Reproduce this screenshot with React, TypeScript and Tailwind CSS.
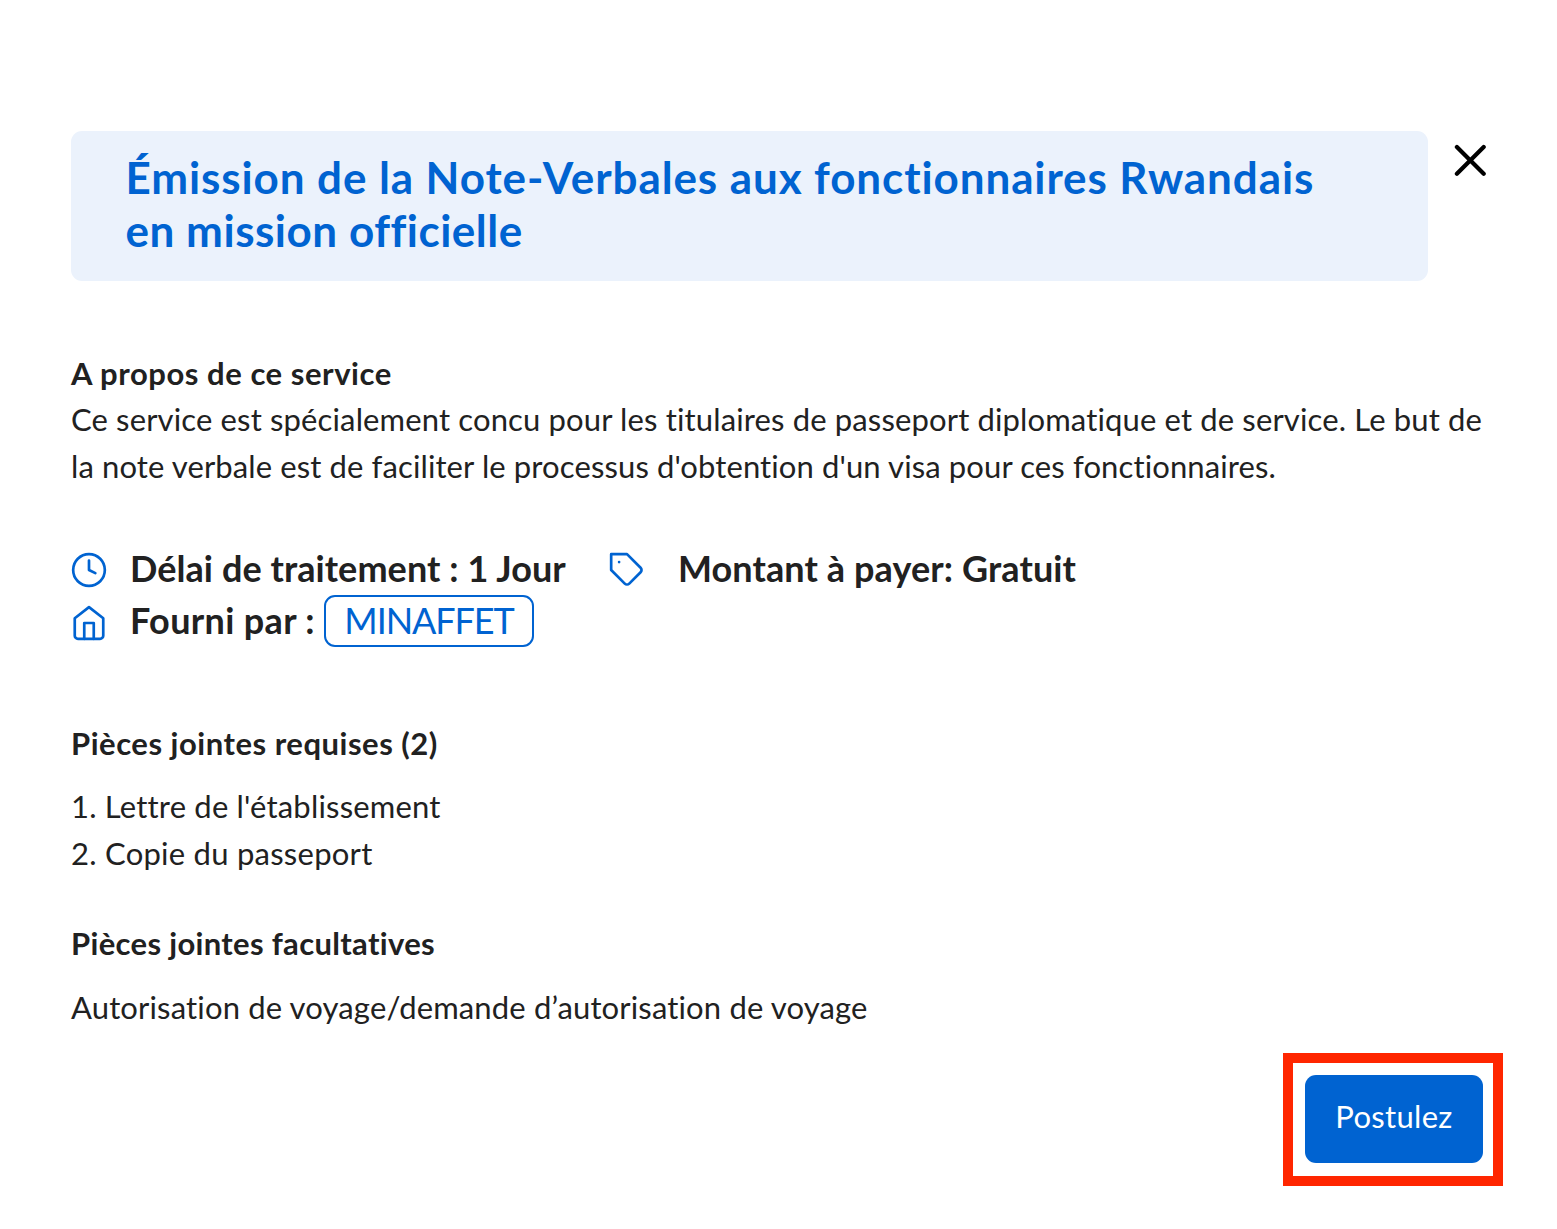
import type { ReactNode } from "react";

const requiredFiles = [
  { name: "1. Lettre de l'établissement", className: "tracking-[0.19px]" },
  { name: "2. Copie du passeport", className: "tracking-[0.25px]" },
];

interface IconProps {
  className?: string;
  children: ReactNode;
}

function Icon({ className, children }: IconProps) {
  return (
    <svg
      viewBox="0 0 24 24"
      fill="none"
      stroke="currentColor"
      strokeWidth="1.7"
      strokeLinecap="round"
      strokeLinejoin="round"
      className={`size-[38px] shrink-0 text-[#0063d1] ${className ?? ""}`}
    >
      {children}
    </svg>
  );
}

function Header() {
  return (
    <header className="flex items-start">
      <div className="h-[150px] w-[1357px] rounded-[11px] bg-[#ebf2fc] pt-[19.5px] pl-[54.5px]">
        <h1 className="text-[44px] leading-[53px] font-bold whitespace-nowrap text-[#0063d1]">
          <span className="block tracking-[0.9px]">
            Émission de la Note-Verbales aux fonctionnaires Rwandais
          </span>
          <span className="block tracking-[0.52px]">en mission officielle</span>
        </h1>
      </div>
      <button aria-label="Fermer" className="mt-[13px] ml-[26px]">
        <svg viewBox="0 0 32 32" className="block size-8" stroke="black" strokeWidth="4.2" strokeLinecap="round">
          <path d="M2.9 2.9l26.8 26.8M29.7 2.9L2.9 29.7" />
        </svg>
      </button>
    </header>
  );
}

function Details() {
  return (
    <section className="mt-[52.5px] text-[36px] leading-[52px] font-bold">
      <div className="flex h-[52px] items-start">
        <Icon className="mt-[9px] -ml-[0.6px]">
          <circle cx="12" cy="12" r="10" />
          <path d="M12 6v6l4 2" />
        </Icon>
        <span className="ml-[21.6px] w-[478px] tracking-[0.07px]">Délai de traitement : 1 Jour</span>
        <Icon className="mt-[9px]">
          <path d="M20.59 13.41l-7.17 7.17a2 2 0 0 1-2.83 0L2 12V2h10l8.59 8.59a2 2 0 0 1 0 2.82z" />
          <path d="M7 7h.01" />
        </Icon>
        <span className="ml-8 tracking-[0.1px]">Montant à payer: Gratuit</span>
      </div>
      <div className="flex h-[52px] items-start">
        <Icon className="mt-[10px] -ml-[0.6px]">
          <path d="M3 9l9-7 9 7v11a2 2 0 0 1-2 2H5a2 2 0 0 1-2-2z" />
          <path d="M9 22V12h6v10" />
        </Icon>
        <span className="ml-[21.6px] w-[194px] tracking-[0.35px]">Fourni par :</span>
        <span className="mt-px flex h-[52px] w-[210px] items-center justify-center rounded-[11px] border-2 border-[#0063d1] pb-0.5 font-normal tracking-[-1.1px] text-[#0063d1]">
          MINAFFET
        </span>
      </div>
    </section>
  );
}

export default function App() {
  return (
    <main className="h-[1229px] w-[1557px] overflow-hidden bg-white pt-[131px] pl-[71px] font-['Lato',sans-serif] text-[31px] leading-[46.5px] whitespace-nowrap text-[#212121]">
      <Header />
      <section className="mt-[68.5px]">
        <h2 className="font-bold tracking-[0.55px]">A propos de ce service</h2>
        <p>
          <span className="block tracking-[0.14px]">
            Ce service est spécialement concu pour les titulaires de passeport diplomatique et de service. Le but de
          </span>
          <span className="block tracking-[0.115px]">
            la note verbale est de faciliter le processus d'obtention d'un visa pour ces fonctionnaires.
          </span>
        </p>
      </section>
      <Details />
      <section className="mt-[74px]">
        <h2 className="font-bold tracking-[0.52px]">Pièces jointes requises (2)</h2>
        <ul className="mt-[17px]">
          {requiredFiles.map((file) => (
            <li key={file.name} className={file.className}>
              {file.name}
            </li>
          ))}
        </ul>
      </section>
      <section className="mt-[43.5px]">
        <h2 className="font-bold tracking-[0.32px]">Pièces jointes facultatives</h2>
        <p className="mt-[17.5px] tracking-[0.15px]">
          Autorisation de voyage/demande d’autorisation de voyage
        </p>
      </section>
      <div className="mt-[22.5px] ml-[1212px] h-[133px] w-[220px] border-10 border-[#ff2600] pt-3 pl-3">
        <button className="block h-[88px] w-[178px] rounded-[11px] bg-[#0063d1] pb-[5px] tracking-[0.3px] text-white">
          Postulez
        </button>
      </div>
    </main>
  );
}
